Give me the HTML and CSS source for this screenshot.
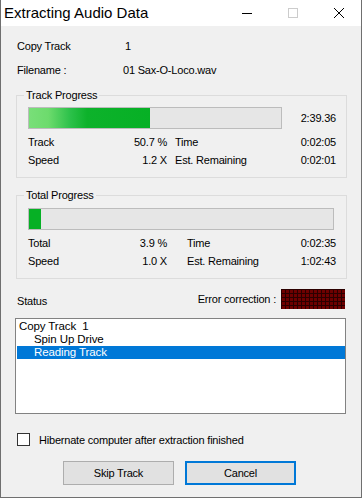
FILE: index.html
```html
<!DOCTYPE html>
<html lang="en">
<head>
    <meta charset="UTF-8">
    <meta name="viewport" content="width=device-width, initial-scale=1.0">
    <title>Extracting Audio Data</title>
    <link rel="stylesheet" href="styles.css">
</head>
<body>
    <div class="window">
        <header class="titlebar">
            <span class="title">Extracting Audio Data</span>
            <div class="caption-buttons">
                <span class="caption-btn">
                    <svg width="10" height="10" viewBox="0 0 10 10"><path d="M0 5.5H10" stroke="#000" stroke-width="1"/></svg>
                </span>
                <span class="caption-btn">
                    <svg width="10" height="10" viewBox="0 0 10 10"><rect x="0.5" y="0.5" width="9" height="9" fill="none" stroke="#cccccc" stroke-width="1"/></svg>
                </span>
                <span class="caption-btn">
                    <svg width="10" height="10" viewBox="0 0 10 10"><path d="M0 0L10 10M10 0L0 10" stroke="#000" stroke-width="1"/></svg>
                </span>
            </div>
        </header>

        <main class="content">
            <div class="info">
                <span>Copy Track</span><span class="info-track">1</span>
                <span>Filename :</span><span>01 Sax-O-Loco.wav</span>
            </div>

            <!-- Progreso de la pista actual -->
            <fieldset class="group">
                <legend>Track Progress</legend>
                <div class="bar-row">
                    <div class="bar bar-track"><div class="bar-fill shine" style="width: 48%"></div></div>
                    <span>2:39.36</span>
                </div>
                <div class="stats">
                    <span>Track</span><span class="num">50.7 %</span><span class="stat-label">Time</span><span class="num">0:02:05</span>
                    <span>Speed</span><span class="num">1.2 X</span><span class="stat-label">Est. Remaining</span><span class="num">0:02:01</span>
                </div>
            </fieldset>

            <!-- Progreso total -->
            <fieldset class="group group-total">
                <legend>Total Progress</legend>
                <div class="bar-row">
                    <div class="bar bar-total"><div class="bar-fill" style="width: 3.9%"></div></div>
                </div>
                <div class="stats stats-total">
                    <span>Total</span><span class="num">3.9 %</span><span class="stat-label">Time</span><span class="num">0:02:35</span>
                    <span>Speed</span><span class="num">1.0 X</span><span class="stat-label">Est. Remaining</span><span class="num">1:02:43</span>
                </div>
            </fieldset>

            <div class="status-row">
                <span class="status-label">Status</span>
                <span class="error-label">Error correction :</span>
                <span class="led"></span>
            </div>

            <ul class="status-list">
                <li>Copy Track&nbsp; 1</li>
                <li class="sub">Spin Up Drive</li>
                <li class="sub selected">Reading Track</li>
            </ul>

            <label class="hibernate">
                <span class="checkbox"></span>
                Hibernate computer after extraction finished
            </label>

            <div class="buttons">
                <button type="button">Skip Track</button>
                <button type="button" class="default">Cancel</button>
            </div>
        </main>
    </div>
</body>
</html>
```

FILE: styles.css
```css
body {
    margin: 0;
    padding: 0;
    font-family: "Liberation Sans", Arial, sans-serif;
    font-size: 11px;
    color: #000;
    background-color: #f0f0f0;
}
.window {
    width: 362px;
    height: 498px;
    box-sizing: border-box;
    background-color: #f0f0f0;
    border: 1px solid #6f6f6f;
    border-top: none;
    overflow: hidden;
}
.titlebar {
    height: 26px;
    background-color: #fff;
    display: flex;
    align-items: center;
    justify-content: space-between;
}
.title {
    font-size: 15px;
    padding-left: 3px;
    padding-bottom: 1px;
}
.caption-buttons {
    display: flex;
    height: 100%;
    margin-right: -1px;
}
.caption-btn {
    width: 46px;
    display: flex;
    align-items: center;
    justify-content: center;
    padding-bottom: 1px;
}
.content {
    padding: 0 14px 0 15px;
    letter-spacing: -0.2px;
}
.info {
    display: grid;
    grid-template-columns: 106px 1fr;
    line-height: 24px;
    padding-top: 8px;
    padding-left: 1px;
}
.info-track {
    padding-left: 2px;
}
.group {
    margin: 6px 0 0;
    border: 1px solid #dcdcdc;
    padding: 5px 10px 8px 11px;
}
.group legend {
    margin-left: -4px;
    padding: 0 2px;
    line-height: 14px;
}
.group-total {
    margin-top: 10px;
    padding-top: 6px;
}
.bar-row {
    display: flex;
    align-items: center;
    justify-content: space-between;
}
.bar {
    height: 22px;
    box-sizing: border-box;
    border: 1px solid #bcbcbc;
    background-color: #e6e6e6;
}
.bar-track {
    width: 254px;
}
.bar-total {
    width: 306px;
}
.bar-fill {
    height: 100%;
    background-color: #06b025;
}
.bar-fill.shine {
    background: linear-gradient(90deg, #79df79 0%, #6ddb6d 16%, #2cc14a 34%, #0db22b 48%, #06b025 100%);
}
.stats {
    display: grid;
    grid-template-columns: 60px 79px 1fr auto;
    line-height: 18px;
    margin-top: 4px;
}
.num {
    text-align: right;
}
.stat-label {
    padding-left: 8px;
}
.stats-total .stat-label {
    padding-left: 20px;
}
.status-row {
    display: flex;
    align-items: center;
    margin-top: 10px;
    height: 20px;
    padding-left: 1px;
    padding-right: 2px;
}
.status-label {
    flex: 1;
    padding-top: 3px;
}
.error-label {
    margin-right: 5px;
}
.led {
    width: 64px;
    height: 20px;
    background-color: #6e0000;
    background-image: linear-gradient(90deg, #2b0000 1px, transparent 1px), linear-gradient(#2b0000 1px, transparent 1px);
    background-size: 4px 4px;
}
.status-list {
    list-style: none;
    margin: 9px 1px 0 -1px;
    padding: 1px 0 0 1px;
    height: 96px;
    box-sizing: border-box;
    background-color: #fff;
    border: 1px solid #828282;
    font-size: 11.5px;
    letter-spacing: -0.1px;
}
.status-list li {
    line-height: 13px;
    padding-left: 2px;
}
.status-list li.sub {
    padding-left: 17px;
}
.status-list li.selected {
    background-color: #0078d7;
    color: #fff;
}
.hibernate {
    display: flex;
    align-items: center;
    gap: 9px;
    margin-top: 19px;
    height: 13px;
    padding-left: 1px;
}
.checkbox {
    width: 13px;
    height: 13px;
    box-sizing: border-box;
    border: 1px solid #333;
    background-color: #fff;
}
.buttons {
    display: flex;
    gap: 11px;
    margin-top: 15px;
    padding-left: 47px;
}
button {
    width: 111px;
    height: 24px;
    font-family: "Liberation Sans", Arial, sans-serif;
    font-size: 11px;
    letter-spacing: -0.2px;
    color: #000;
    background-color: #e1e1e1;
    border: 1px solid #adadad;
    padding: 0;
}
button.default {
    border: 2px solid #0078d7;
}
```
